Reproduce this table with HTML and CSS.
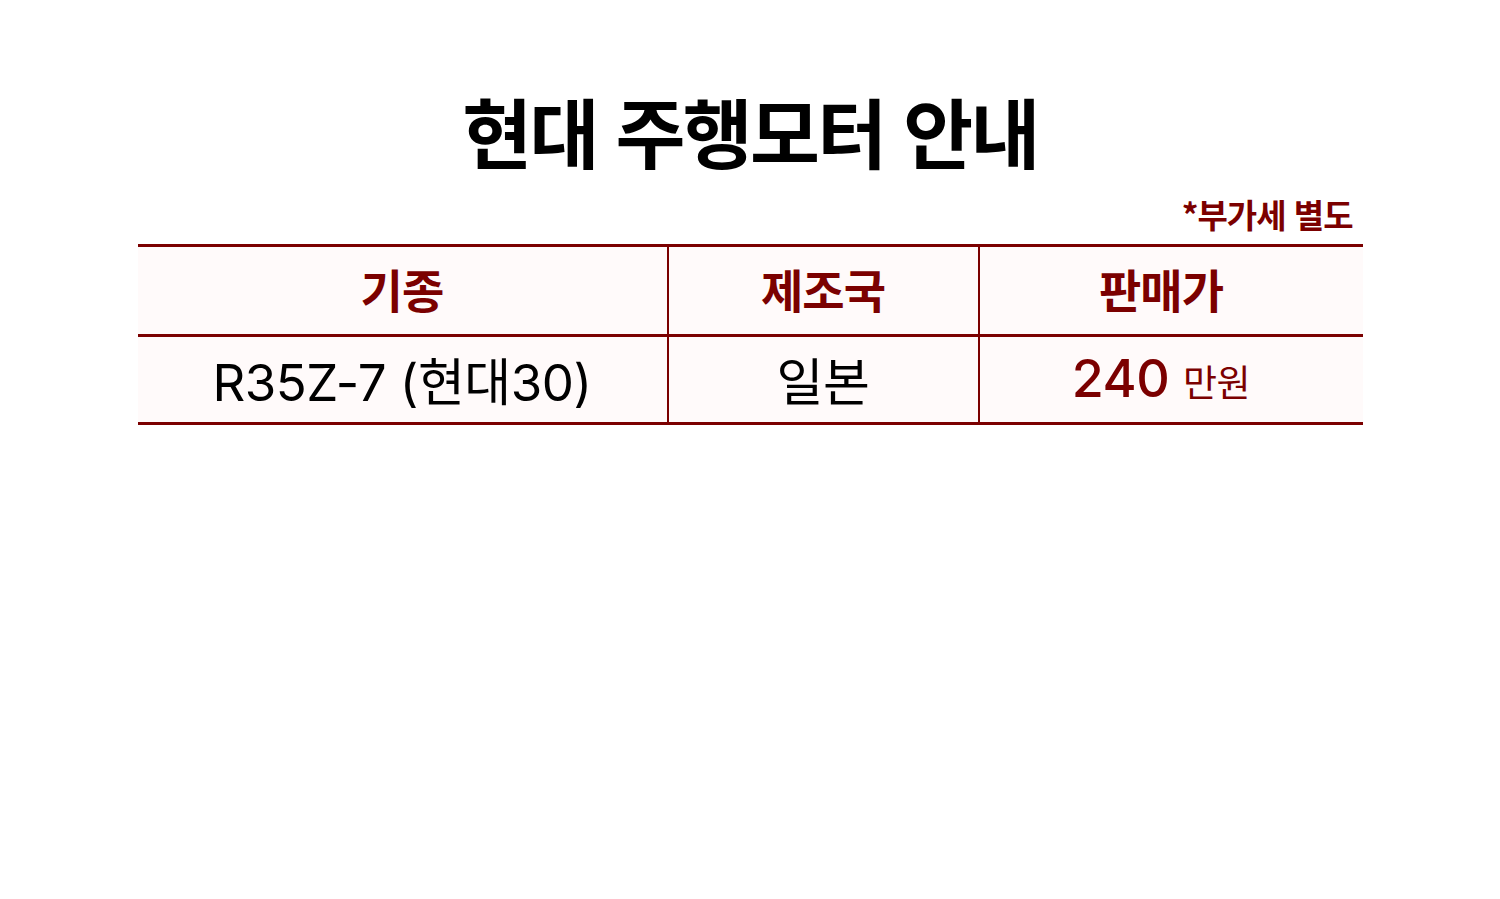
FILE: index.html
```html
<!DOCTYPE html>
<html lang="ko">
<head>
<meta charset="utf-8">
<link rel="stylesheet" href="styles.css">
</head>
<body>
<main class="page">
  <h1 class="title">현대 주행모터 안내</h1>
  <div class="note">*부가세 별도</div>
  <table class="price">
    <thead>
      <tr>
        <th class="c1">기종</th>
        <th class="c2">제조국</th>
        <th class="c3">판매가</th>
      </tr>
    </thead>
    <tbody>
      <tr>
        <td>R35Z-7 (현대30)</td>
        <td>일본</td>
        <td class="c3 amount"><span class="num">240</span> <span class="unit">만원</span></td>
      </tr>
    </tbody>
  </table>
</main>
</body>
</html>
```
FILE: styles.css
```css
html, body {
  margin: 0;
  padding: 0;
  background: #ffffff;
}
body {
  font-family: "Inter", "Noto Sans CJK KR", "Noto Sans", sans-serif;
  color: #000;
}
.page {
  width: 1225px;
  margin: 0 auto;
  padding-top: 80px;
}
.title {
  margin: 0;
  text-align: center;
  font-family: "Noto Sans CJK KR", sans-serif;
  font-size: 76px;
  font-weight: 700;
  letter-spacing: -0.035em;
  line-height: 100px;
}
.note {
  text-align: right;
  color: #7b0000;
  font-family: "Noto Sans CJK KR", sans-serif;
  font-size: 33px;
  font-weight: 700;
  line-height: 40px;
  padding-right: 10px;
  margin-top: 14px;
  letter-spacing: -0.03em;
}
.price {
  width: 100%;
  border-collapse: collapse;
  margin-top: 10px;
  table-layout: fixed;
}
.price th, .price td {
  background: #fffafa;
  text-align: center;
  border-top: 3px solid #7b0000;
  border-bottom: 3px solid #7b0000;
  padding: 0;
}
.price th { height: 81px; padding-bottom: 6px; }
.price td { height: 83px; padding-bottom: 2px; }
.price th + th, .price td + td {
  border-left: 2px solid #7b0000;
}
.c1 { width: 529px; }
.c2 { width: 309px; }
.price .c3 { padding-right: 20px; }
.price th {
  color: #7b0000;
  font-family: "Noto Sans CJK KR", sans-serif;
  font-size: 46px;
  font-weight: 700;
  letter-spacing: -0.02em;
}
.price td {
  font-size: 51px;
  font-weight: 400;
  letter-spacing: -0.01em;
}
.amount { color: #7b0000; }
.amount .num { font-weight: 500; font-size: 52px; }
.amount .unit { font-size: 37px; }
```
